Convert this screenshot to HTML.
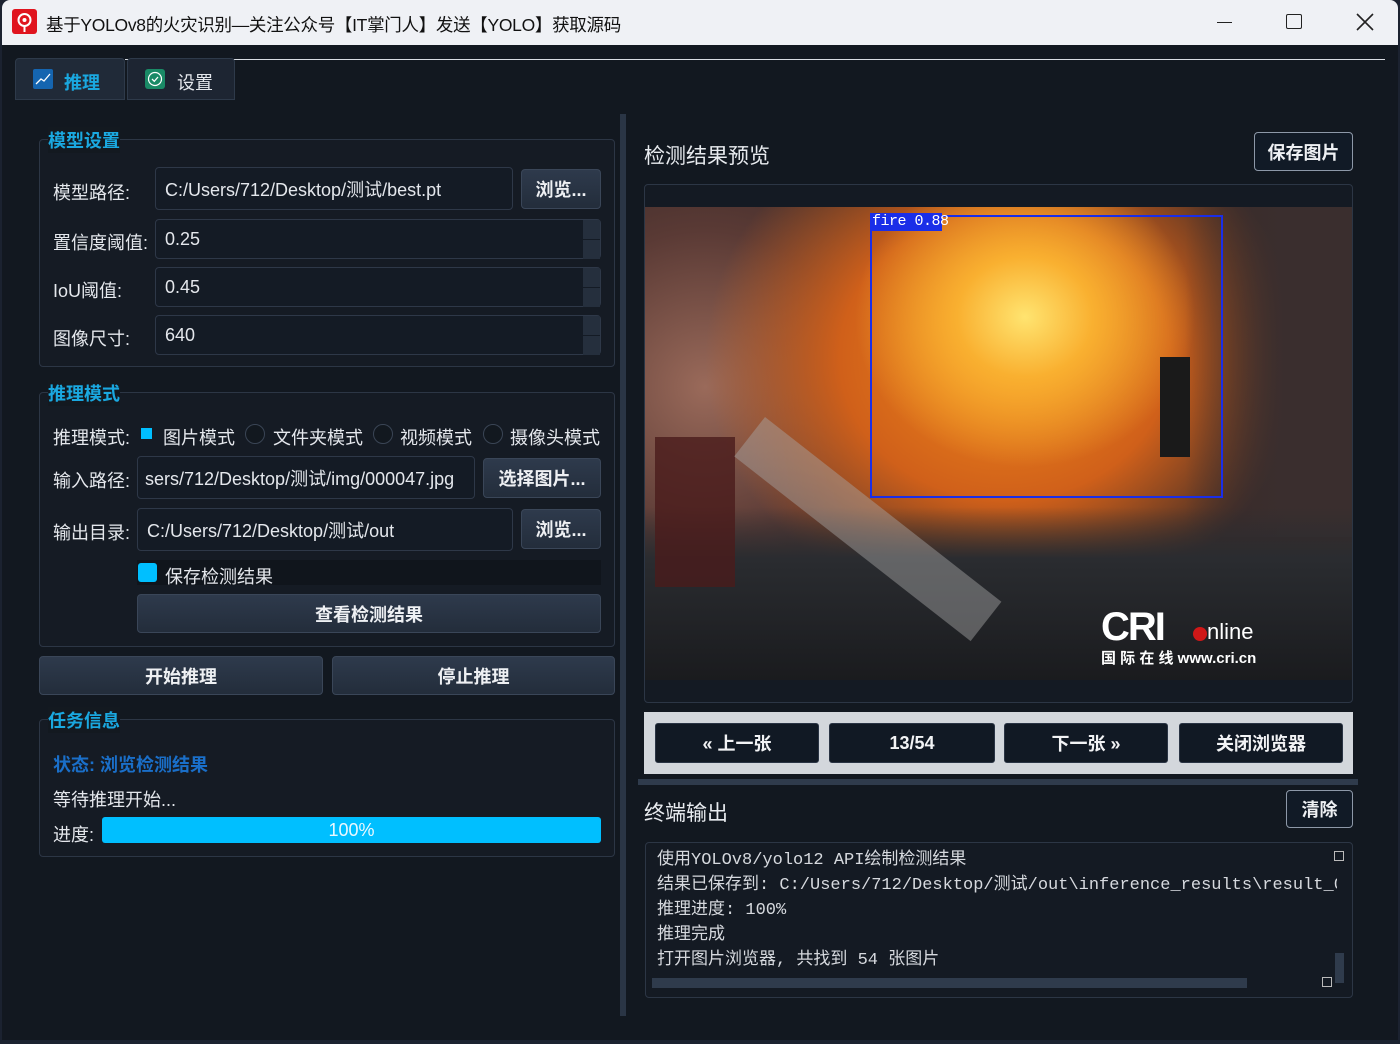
<!DOCTYPE html>
<html><head><meta charset="utf-8">
<style>
*{margin:0;padding:0;box-sizing:border-box}
html,body{width:1400px;height:1044px;overflow:hidden}
body{background:#1b2230;font-family:"Liberation Sans","Noto Sans CJK SC",sans-serif;position:relative;color:#e6e9ee}
.a{position:absolute}
#title{left:2px;top:0;width:1396px;height:45px;background:#eff1f5;color:#111;font-size:18px;border-radius:8px 8px 0 0}
#win{left:2px;top:45px;width:1396px;height:995px;background:#121820}
.grp{border:1px solid #2c3645;border-radius:4px;background:#151b24}
.gt{color:#1aa8e0;font-size:18px;font-weight:bold;background:#131920}
.lbl{font-size:18px;color:#e4e7ec}
.inp{background:#141b25;border:1px solid #2e3848;border-radius:4px;font-size:18px;color:#e4e7ec;padding-left:9px;display:flex;align-items:center}
.btn{background:linear-gradient(#2e3a4c,#232d3b);border:1px solid #3a4658;border-radius:4px;font-size:18px;font-weight:bold;color:#eef0f3;display:flex;align-items:center;justify-content:center}
.spin{position:absolute;right:0;width:17px;background:#252f3d}
.nb{background:#111924;border:1px solid #2a3444;border-radius:3px;color:#f2f3f5;font-weight:bold;font-size:18px;display:flex;align-items:center;justify-content:center;top:723px;height:40px}
.radio{width:20px;height:20px;border-radius:50%;border:1px solid #3a4555;background:#12181f}
.mono{font-family:"Liberation Mono","Noto Sans CJK SC",monospace;font-size:17px;color:#d6d9de;line-height:25px}
</style></head><body>
<div id="title" class="a">
 <div class="a" style="left:10px;top:9px;width:25px;height:25px;background:#e0141e;border-radius:3px">
  <svg width="25" height="25"><circle cx="12.5" cy="11" r="6" fill="none" stroke="#fff" stroke-width="2"/><circle cx="12.5" cy="11" r="2" fill="#fff"/><line x1="12.5" y1="17" x2="12.5" y2="23" stroke="#fff" stroke-width="2"/></svg>
 </div>
 <div class="a" style="left:44px;top:12px;font-size:17.5px;letter-spacing:-0.3px">基于YOLOv8的火灾识别—关注公众号【IT掌门人】发送【YOLO】获取源码</div>
 <div class="a" style="left:1215px;top:22px;width:15px;height:1px;background:#222"></div>
 <div class="a" style="left:1284px;top:14px;width:16px;height:15px;border:1.5px solid #222;border-radius:2px"></div>
 <svg class="a" style="left:1354px;top:13px" width="18" height="18"><path d="M1 1L17 17M17 1L1 17" stroke="#222" stroke-width="1.6"/></svg>
</div>
<div id="win" class="a"></div>
<!-- tabs -->
<div class="a" style="left:125px;top:59px;width:1260px;height:1px;background:#d8dce2"></div>
<div class="a" style="left:15px;top:58px;width:110px;height:42px;background:#202a38;border:1px solid #2e3a4a;border-radius:4px 4px 0 0"></div>
<div class="a" style="left:33px;top:69px;width:20px;height:20px;background:#1565b0;border-radius:2px"><svg width="20" height="20"><path d="M3 15L8 10L11 12L17 5" stroke="#fff" fill="none" stroke-width="1.3"/></svg></div>
<div class="a" style="left:64px;top:69px;font-size:18px;font-weight:bold;color:#1aa8e0">推理</div>
<div class="a" style="left:127px;top:58px;width:108px;height:42px;background:#1d2532;border:1px solid #2e3a4a;border-radius:4px 4px 0 0"></div>
<div class="a" style="left:145px;top:69px;width:20px;height:20px;background:#1a8a66;border-radius:3px"><svg width="20" height="20"><circle cx="10" cy="10" r="6.5" fill="none" stroke="#fff" stroke-width="1.2"/><path d="M7 10L9.3 12.3L13 8" stroke="#fff" fill="none" stroke-width="1.3"/></svg></div>
<div class="a" style="left:177px;top:69px;font-size:18px;color:#e4e7ec">设置</div>
<!-- splitter -->
<div class="a" style="left:620px;top:114px;width:6px;height:902px;background:#2a3545"></div>

<!-- model settings -->
<div class="a grp" style="left:39px;top:139px;width:576px;height:228px"></div>
<div class="a gt" style="left:48px;top:127px">模型设置</div>
<div class="a lbl" style="left:53px;top:179px">模型路径:</div>
<div class="a inp" style="left:155px;top:167px;width:358px;height:43px">C:/Users/712/Desktop/测试/best.pt</div>
<div class="a btn" style="left:521px;top:169px;width:80px;height:40px">浏览...</div>
<div class="a lbl" style="left:53px;top:229px">置信度阈值:</div>
<div class="a inp" style="left:155px;top:219px;width:446px;height:40px">0.25<div class="spin" style="top:0;height:19px"></div><div class="spin" style="top:20px;height:19px"></div></div>
<div class="a lbl" style="left:53px;top:277px">IoU阈值:</div>
<div class="a inp" style="left:155px;top:267px;width:446px;height:40px">0.45<div class="spin" style="top:0;height:19px"></div><div class="spin" style="top:20px;height:19px"></div></div>
<div class="a lbl" style="left:53px;top:325px">图像尺寸:</div>
<div class="a inp" style="left:155px;top:315px;width:446px;height:40px">640<div class="spin" style="top:0;height:19px"></div><div class="spin" style="top:20px;height:19px"></div></div>

<!-- inference mode -->
<div class="a grp" style="left:39px;top:392px;width:576px;height:255px"></div>
<div class="a gt" style="left:48px;top:380px">推理模式</div>
<div class="a lbl" style="left:53px;top:424px">推理模式:</div>
<div class="a" style="left:141px;top:428px;width:11px;height:11px;background:#00bfff"></div>
<div class="a lbl" style="left:163px;top:424px">图片模式</div>
<div class="a radio" style="left:245px;top:424px"></div>
<div class="a lbl" style="left:273px;top:424px">文件夹模式</div>
<div class="a radio" style="left:373px;top:424px"></div>
<div class="a lbl" style="left:400px;top:424px">视频模式</div>
<div class="a radio" style="left:483px;top:424px"></div>
<div class="a lbl" style="left:510px;top:424px">摄像头模式</div>
<div class="a lbl" style="left:53px;top:467px">输入路径:</div>
<div class="a inp" style="left:137px;top:456px;width:338px;height:43px;padding-left:7px">sers/712/Desktop/测试/img/000047.jpg</div>
<div class="a btn" style="left:483px;top:458px;width:118px;height:40px">选择图片...</div>
<div class="a lbl" style="left:53px;top:519px">输出目录:</div>
<div class="a inp" style="left:137px;top:508px;width:376px;height:43px">C:/Users/712/Desktop/测试/out</div>
<div class="a btn" style="left:521px;top:509px;width:80px;height:40px">浏览...</div>
<div class="a" style="left:137px;top:560px;width:464px;height:25px;background:#10151c"></div>
<div class="a" style="left:138px;top:563px;width:19px;height:19px;background:#00bfff;border-radius:3px"></div>
<div class="a lbl" style="left:165px;top:563px">保存检测结果</div>
<div class="a btn" style="left:137px;top:594px;width:464px;height:39px;font-weight:bold">查看检测结果</div>

<div class="a btn" style="left:39px;top:656px;width:284px;height:39px">开始推理</div>
<div class="a btn" style="left:332px;top:656px;width:283px;height:39px">停止推理</div>

<!-- task info -->
<div class="a grp" style="left:39px;top:719px;width:576px;height:138px"></div>
<div class="a gt" style="left:48px;top:707px">任务信息</div>
<div class="a" style="left:53px;top:751px;font-size:18px;font-weight:bold;color:#1a6fc9">状态: 浏览检测结果</div>
<div class="a lbl" style="left:53px;top:786px">等待推理开始...</div>
<div class="a lbl" style="left:53px;top:821px">进度:</div>
<div class="a" style="left:102px;top:817px;width:499px;height:26px;background:#00bfff;border-radius:3px;color:#eaf8ff;font-size:18px;text-align:center;line-height:27px">100%</div>

<!-- right -->
<div class="a" style="left:644px;top:140px;font-size:21px;color:#e8ebef">检测结果预览</div>
<div class="a btn" style="left:1254px;top:132px;width:99px;height:39px;background:#111a26;border:1px solid #8d98a8">保存图片</div>
<div class="a" style="left:644px;top:184px;width:709px;height:519px;border:1px solid #2c3645;border-radius:4px;background:#141a23"></div>
<div class="a" style="left:645px;top:207px;width:707px;height:473px;overflow:hidden;background:#3a2a28">
 <div class="a" style="left:0;top:0;width:707px;height:473px;background:
 radial-gradient(ellipse 170px 150px at 380px 110px,#ffe470 0%,#f9b030 40%,rgba(240,120,20,0) 100%),
 radial-gradient(ellipse 300px 260px at 360px 150px,#f08a1c 0%,#d0601a 55%,rgba(120,40,20,0) 100%),
 radial-gradient(ellipse 260px 260px at 60px 180px,#9a6a5a 0%,#5a3a35 60%,#3a2a28 100%)"></div>
 <div class="a" style="left:540px;top:0;width:167px;height:330px;background:linear-gradient(90deg,rgba(60,40,40,0),#3a2e2e 60%)"></div>
 <div class="a" style="left:0;top:300px;width:707px;height:173px;background:linear-gradient(rgba(50,52,56,0),#2a2c30 30%,#1a1b1e)"></div>
 <div class="a" style="left:10px;top:230px;width:80px;height:150px;background:#4a1c1c;opacity:.8"></div>
 <div class="a" style="left:120px;top:210px;width:300px;height:50px;background:#a8a8a8;transform:rotate(38deg);transform-origin:0 0;opacity:.45"></div>
 <div class="a" style="left:515px;top:150px;width:30px;height:100px;background:#1a1a1a"></div>
 <div class="a" style="left:225px;top:8px;width:353px;height:283px;border:2px solid #1a2ee8"></div>
 <div class="a" style="left:225px;top:6px;width:72px;height:18px;background:#1a2ee8;color:#fff;font-family:'Liberation Mono',monospace;font-size:15px;line-height:18px;padding-left:2px;white-space:nowrap;letter-spacing:-0.5px">fire 0.88</div>
 <div class="a" style="left:456px;top:398px;font-size:40px;font-weight:bold;color:#fff;letter-spacing:-2px">CRI</div>
 <div class="a" style="left:562px;top:412px;font-size:22px;color:#fff">nline</div>
 <div class="a" style="left:548px;top:420px;width:14px;height:14px;border-radius:50%;background:#d01818"></div>
 <div class="a" style="left:456px;top:440px;font-size:15px;font-weight:bold;color:#fff">国 际 在 线 www.cri.cn</div>
</div>
<div class="a" style="left:644px;top:712px;width:709px;height:62px;background:#d3d7dc"></div>
<div class="a nb" style="left:655px;width:164px">« 上一张</div>
<div class="a nb" style="left:829px;width:166px">13/54</div>
<div class="a nb" style="left:1004px;width:164px">下一张 »</div>
<div class="a nb" style="left:1179px;width:164px">关闭浏览器</div>
<div class="a" style="left:638px;top:779px;width:720px;height:6px;background:#2f3b4c"></div>
<div class="a" style="left:644px;top:797px;font-size:21px;color:#e8ebef">终端输出</div>
<div class="a btn" style="left:1286px;top:790px;width:67px;height:38px;background:#111a26;border:1px solid #8d98a8">清除</div>
<div class="a" style="left:645px;top:842px;width:708px;height:156px;border:1px solid #2c3645;border-radius:4px;background:#141a23;overflow:hidden">
 <div class="a mono" style="left:11px;top:5px;white-space:nowrap;width:680px;overflow:hidden">使用YOLOv8/yolo12 API绘制检测结果<br>结果已保存到: C:/Users/712/Desktop/测试/out\inference_results\result_0<br>推理进度: 100%<br>推理完成<br>打开图片浏览器, 共找到 54 张图片</div>
 <div class="a" style="left:688px;top:8px;width:10px;height:10px;border:1px solid #bbb"></div>
 <div class="a" style="left:689px;top:110px;width:9px;height:30px;background:#2f3b4c"></div>
 <div class="a" style="left:6px;top:135px;width:595px;height:10px;background:#2f3b4c"></div>
 <div class="a" style="left:676px;top:134px;width:10px;height:10px;border:1px solid #bbb"></div>
</div>
</body></html>
